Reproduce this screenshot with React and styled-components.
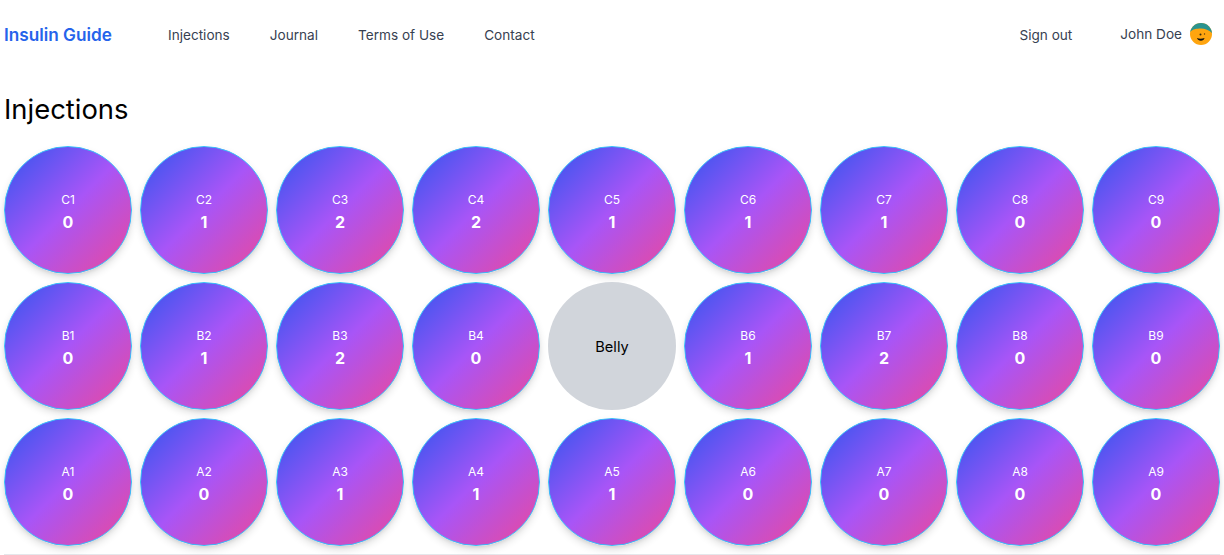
import React from 'react';
import styled, { createGlobalStyle } from 'styled-components';

const GlobalStyle = createGlobalStyle`
  html, body {
    margin: 0;
    padding: 0;
    background: #fff;
    font-family: Inter, "Liberation Sans", sans-serif;
  }
`;

const Page = styled.div`
  padding: 0 4px;
`;

const Nav = styled.nav`
  display: flex;
  align-items: center;
  height: 69px;
  margin-bottom: 1px;
`;

const Logo = styled.a`
  width: 164px;
  color: #2563eb;
  font-size: 17.2px;
  font-weight: 600;
`;

const NavLinks = styled.div`
  display: flex;
  gap: 40px;
  flex: 1;
`;

const NavLink = styled.a`
  color: #374151;
  font-size: 13.6px;
`;

const UserArea = styled.div`
  display: flex;
  align-items: center;
  gap: 48px;
  padding-right: 8px;
`;

const User = styled.div`
  display: flex;
  align-items: center;
  gap: 8px;
  margin-top: -1px;
  color: #374151;
  font-size: 13.6px;
`;

const Title = styled.h1`
  margin: 0;
  height: 76px;
  padding-top: 19px;
  box-sizing: border-box;
  font-size: 27.4px;
  font-weight: 400;
  line-height: 40px;
  color: #000;
`;

const Grid = styled.div`
  display: grid;
  grid-template-columns: repeat(9, 128px);
  gap: 8px;
`;

const Spot = styled.div`
  box-sizing: border-box;
  width: 128px;
  height: 128px;
  border-radius: 50%;
  border: 1px solid #38bdf8;
  background: linear-gradient(to bottom right, #2d55ee, #a855f7, #ec4899);
  background-origin: border-box;
  box-shadow: 0 4px 8px -1px rgba(0, 0, 0, 0.16), 0 2px 4px -2px rgba(0, 0, 0, 0.12);
  color: #fff;
  display: flex;
  flex-direction: column;
  align-items: center;
  justify-content: center;
`;

const SpotName = styled.span`
  font-size: 12px;
  line-height: 16px;
  margin-top: 5px;
`;

const SpotCount = styled.span`
  font-size: 16px;
  font-weight: 700;
  line-height: 24px;
  margin-top: 2px;
`;

const Belly = styled.div`
  width: 128px;
  height: 128px;
  padding-top: 1px;
  box-sizing: border-box;
  border-radius: 50%;
  background: #d1d5db;
  color: #000;
  font-size: 14.6px;
  display: flex;
  align-items: center;
  justify-content: center;
`;

const Rule = styled.hr`
  margin: 8px 0 0;
  border: 0;
  border-top: 1px solid #e5e7eb;
`;

const rows = [
  ['C', [0, 1, 2, 2, 1, 1, 1, 0, 0]],
  ['B', [0, 1, 2, 0, null, 1, 2, 0, 0]],
  ['A', [0, 0, 1, 1, 1, 0, 0, 0, 0]],
];

const Avatar = () => (
  <svg width="22" height="22" viewBox="0 0 22 22">
    <defs>
      <clipPath id="face">
        <circle cx="11" cy="11" r="11" />
      </clipPath>
    </defs>
    <g clipPath="url(#face)">
      <rect width="22" height="22" fill="#ffa50f" />
      <path d="M0 0H22V10C19 7 15 5.5 11 5.5C6 5.5 3 6 0 9Z" fill="#2a9490" />
      <circle cx="10.5" cy="11.5" r="1" fill="#3a2a10" />
      <circle cx="14.5" cy="11" r="0.7" fill="#5a3a10" />
      <path d="M7 15C9 16 12 16 14.5 15C14 18.5 8 18.7 7 15Z" fill="#111" />
    </g>
  </svg>
);

export default function App() {
  return (
    <Page>
      <GlobalStyle />
      <Nav>
        <Logo>Insulin Guide</Logo>
        <NavLinks>
          <NavLink>Injections</NavLink>
          <NavLink>Journal</NavLink>
          <NavLink>Terms of Use</NavLink>
          <NavLink>Contact</NavLink>
        </NavLinks>
        <UserArea>
          <NavLink>Sign out</NavLink>
          <User>
            John Doe
            <Avatar />
          </User>
        </UserArea>
      </Nav>
      <Title>Injections</Title>
      <Grid>
        {rows.map(([letter, counts]) =>
          counts.map((count, i) =>
            count === null ? (
              <Belly key={letter + i}>Belly</Belly>
            ) : (
              <Spot key={letter + i}>
                <SpotName>{letter}{i + 1}</SpotName>
                <SpotCount>{count}</SpotCount>
              </Spot>
            )
          )
        )}
      </Grid>
      <Rule />
    </Page>
  );
}
